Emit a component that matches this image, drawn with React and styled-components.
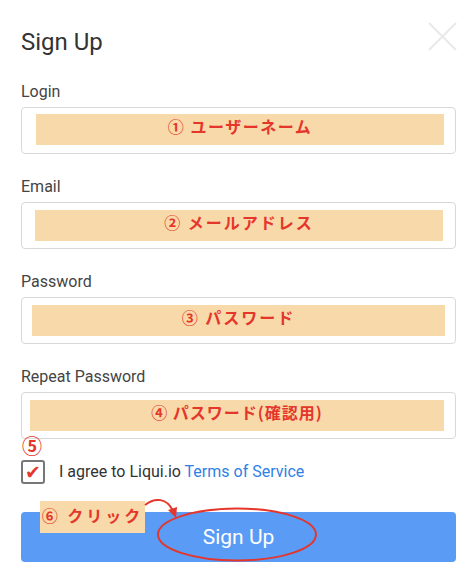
import React from 'react';
import styled, { createGlobalStyle } from 'styled-components';

const GlobalStyle = createGlobalStyle`
  html, body {
    margin: 0;
    padding: 0;
    background: #fff;
  }
  body {
    font-family: Roboto, "Noto Sans", "Liberation Sans", sans-serif;
    color: #333;
  }
`;

const RED = '#e5362b';

const Modal = styled.div`
  width: 469px;
  box-sizing: border-box;
  padding: 22px 13px 0 21px;
`;

const Header = styled.div`
  display: flex;
  justify-content: space-between;
  align-items: flex-start;
`;

const Title = styled.h1`
  margin: 6px 0 0;
  font-size: 24px;
  line-height: 28px;
  font-weight: 400;
  color: #333;
`;

const Close = styled.button`
  width: 29px;
  height: 29px;
  padding: 0;
  margin-right: -1px;
  border: 0;
  background: none;
  cursor: pointer;
  display: flex;
`;

const Form = styled.form`
  display: flex;
  flex-direction: column;
  gap: 23px;
  margin-top: 26px;
`;

const Field = styled.div`
  display: flex;
  flex-direction: column;
  gap: 5px;
`;

const Label = styled.label`
  font-size: 16px;
  line-height: 20px;
  color: #444;
`;

const InputBox = styled.div`
  height: 47px;
  box-sizing: border-box;
  border: 1px solid #d8d8d8;
  border-radius: 4px;
  display: flex;
  align-items: flex-start;
`;

const Note = styled.div`
  flex: 1;
  height: 31px;
  margin: ${p => p.$top}px ${p => p.$right}px 0 ${p => p.$left}px;
  background: #f8d9a9;
  display: flex;
  justify-content: center;
  padding-top: 1px;
  box-sizing: border-box;
  font-family: "Noto Sans CJK JP", sans-serif;
  font-weight: 700;
  font-size: 16px;
  line-height: 22px;
  letter-spacing: ${p => p.$spacing || 1.5}px;
  color: ${RED};
  white-space: nowrap;
`;

const AgreeRow = styled.div`
  position: relative;
  display: flex;
  align-items: center;
  gap: 14px;
  margin-top: -2px;
`;

const StepMark = styled.span`
  position: absolute;
  left: 1px;
  top: -25px;
  font-family: "Noto Sans CJK JP", sans-serif;
  font-weight: 700;
  font-size: 20px;
  line-height: 22px;
  color: ${RED};
`;

const CheckBox = styled.span`
  width: 24px;
  height: 24px;
  box-sizing: border-box;
  border: 2px solid #777;
  border-radius: 3px;
  display: flex;
  align-items: center;
  justify-content: center;
  color: ${RED};
  font-family: "DejaVu Sans", sans-serif;
  font-size: 19px;
  line-height: 1;
`;

const AgreeText = styled.span`
  font-size: 16px;
  line-height: 20px;
  color: #333;
`;

const Link = styled.a`
  color: #2f7fe6;
  text-decoration: none;
`;

const ButtonWrap = styled.div`
  position: relative;
  margin-top: 5px;
`;

const Submit = styled.button`
  width: 100%;
  height: 50px;
  border: 0;
  border-radius: 4px;
  background: #5a9bf5;
  color: #fff;
  font-family: Roboto, sans-serif;
  font-size: 21px;
  cursor: pointer;
`;

const ClickNote = styled(Note)`
  position: absolute;
  left: 19px;
  top: -11px;
  width: 105px;
  height: 32px;
  margin: 0;
  padding-top: 3px;
  letter-spacing: 3px;
`;

const Overlay = styled.svg`
  position: absolute;
  left: 0;
  top: -17px;
  pointer-events: none;
  overflow: visible;
`;

const fields = [
  { label: 'Login', note: '① ユーザーネーム', top: 6, left: 14, right: 11 },
  { label: 'Email', note: '② メールアドレス', top: 7, left: 13, right: 12, spacing: 2 },
  { label: 'Password', note: '③ パスワード', top: 7, left: 10, right: 10, spacing: 2 },
  { label: 'Repeat Password', note: '④ パスワード(確認用)', top: 7, left: 8, right: 11, spacing: 1 },
];

const App = () => (
  <>
    <GlobalStyle />
    <Modal>
      <Header>
        <Title>Sign Up</Title>
        <Close type="button" aria-label="close">
          <svg width="29" height="29" viewBox="0 0 29 29">
            <path d="M1 1 L28 28 M28 1 L1 28" stroke="#e9e9e9" strokeWidth="2" />
          </svg>
        </Close>
      </Header>
      <Form onSubmit={e => e.preventDefault ()}>
        {fields.map (f => (
          <Field key={f.label}>
            <Label>{f.label}</Label>
            <InputBox>
              <Note $top={f.top} $left={f.left} $right={f.right} $spacing={f.spacing}>
                {f.note}
              </Note>
            </InputBox>
          </Field>
        ))}
        <AgreeRow>
          <StepMark>⑤</StepMark>
          <CheckBox>✔</CheckBox>
          <AgreeText>
            I agree to Liqui.io <Link href="#terms">Terms of Service</Link>
          </AgreeText>
        </AgreeRow>
        <ButtonWrap>
          <Submit type="submit">Sign Up</Submit>
          <ClickNote>⑥ クリック</ClickNote>
          <Overlay width="435" height="70" viewBox="0 0 435 70">
            <ellipse cx="216" cy="39.5" rx="79" ry="26" fill="none" stroke={RED} strokeWidth="2" />
            <path d="M124 10 C 134 2, 146 3, 152 16" fill="none" stroke={RED} strokeWidth="2" />
            <polygon points="155,23 147,15 156,12" fill={RED} />
          </Overlay>
        </ButtonWrap>
      </Form>
    </Modal>
  </>
);

export default App;
